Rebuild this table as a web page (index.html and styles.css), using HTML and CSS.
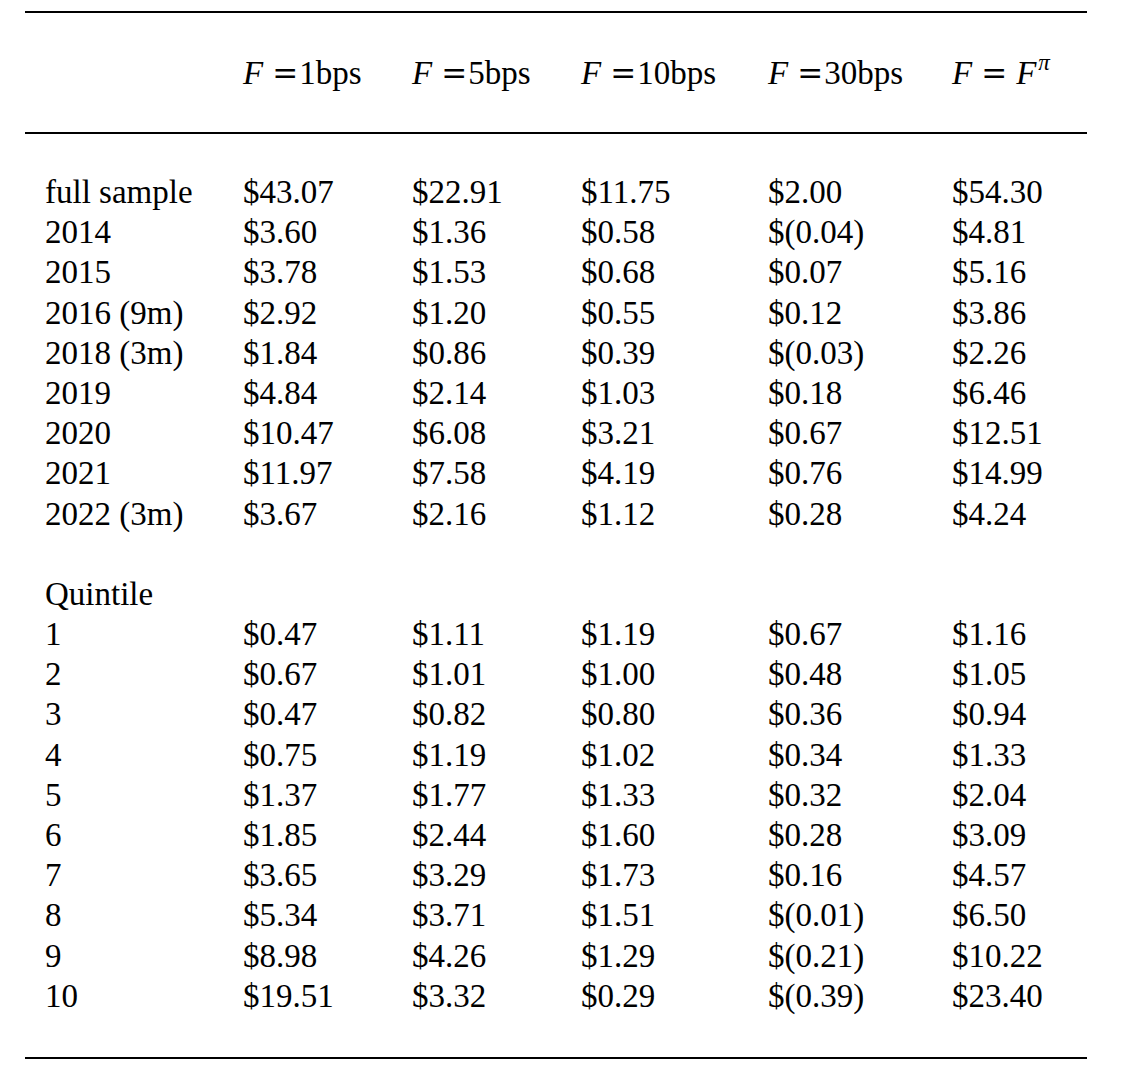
FILE: index.html
```html
<!DOCTYPE html>
<html>
<head>
<meta charset="utf-8">
<link rel="stylesheet" href="styles.css">
</head>
<body>
<div class="page">
<table class="tbl">
<colgroup>
<col class="c0"><col class="c1"><col class="c2"><col class="c3"><col class="c4"><col class="c5">
</colgroup>
<thead>
<tr>
<th></th>
<th><span class="m">F</span><span class="rel">=</span>1bps</th>
<th><span class="m">F</span><span class="rel">=</span>5bps</th>
<th><span class="m">F</span><span class="rel">=</span>10bps</th>
<th><span class="m">F</span><span class="rel">=</span>30bps</th>
<th><span class="m">F</span><span class="rel both">=</span><span class="m">F</span><sup class="sup">π</sup></th>
</tr>
</thead>
<tbody>
<tr class="first"><td>full sample</td><td>$43.07</td><td>$22.91</td><td>$11.75</td><td>$2.00</td><td>$54.30</td></tr>
<tr><td>2014</td><td>$3.60</td><td>$1.36</td><td>$0.58</td><td>$(0.04)</td><td>$4.81</td></tr>
<tr><td>2015</td><td>$3.78</td><td>$1.53</td><td>$0.68</td><td>$0.07</td><td>$5.16</td></tr>
<tr><td>2016 (9m)</td><td>$2.92</td><td>$1.20</td><td>$0.55</td><td>$0.12</td><td>$3.86</td></tr>
<tr><td>2018 (3m)</td><td>$1.84</td><td>$0.86</td><td>$0.39</td><td>$(0.03)</td><td>$2.26</td></tr>
<tr><td>2019</td><td>$4.84</td><td>$2.14</td><td>$1.03</td><td>$0.18</td><td>$6.46</td></tr>
<tr><td>2020</td><td>$10.47</td><td>$6.08</td><td>$3.21</td><td>$0.67</td><td>$12.51</td></tr>
<tr><td>2021</td><td>$11.97</td><td>$7.58</td><td>$4.19</td><td>$0.76</td><td>$14.99</td></tr>
<tr><td>2022 (3m)</td><td>$3.67</td><td>$2.16</td><td>$1.12</td><td>$0.28</td><td>$4.24</td></tr>
<tr class="group"><td>Quintile</td><td></td><td></td><td></td><td></td><td></td></tr>
<tr><td>1</td><td>$0.47</td><td>$1.11</td><td>$1.19</td><td>$0.67</td><td>$1.16</td></tr>
<tr><td>2</td><td>$0.67</td><td>$1.01</td><td>$1.00</td><td>$0.48</td><td>$1.05</td></tr>
<tr><td>3</td><td>$0.47</td><td>$0.82</td><td>$0.80</td><td>$0.36</td><td>$0.94</td></tr>
<tr><td>4</td><td>$0.75</td><td>$1.19</td><td>$1.02</td><td>$0.34</td><td>$1.33</td></tr>
<tr><td>5</td><td>$1.37</td><td>$1.77</td><td>$1.33</td><td>$0.32</td><td>$2.04</td></tr>
<tr><td>6</td><td>$1.85</td><td>$2.44</td><td>$1.60</td><td>$0.28</td><td>$3.09</td></tr>
<tr><td>7</td><td>$3.65</td><td>$3.29</td><td>$1.73</td><td>$0.16</td><td>$4.57</td></tr>
<tr><td>8</td><td>$5.34</td><td>$3.71</td><td>$1.51</td><td>$(0.01)</td><td>$6.50</td></tr>
<tr><td>9</td><td>$8.98</td><td>$4.26</td><td>$1.29</td><td>$(0.21)</td><td>$10.22</td></tr>
<tr class="last"><td>10</td><td>$19.51</td><td>$3.32</td><td>$0.29</td><td>$(0.39)</td><td>$23.40</td></tr>
</tbody>
</table>
</div>
</body>
</html>
```
FILE: styles.css
```css
html, body {
  margin: 0;
  padding: 0;
  background: #fff;
}
.page {
  padding: 11px 0 0 25px;
}
.tbl {
  border-collapse: separate;
  border-spacing: 0;
  table-layout: fixed;
  width: 1062px;
  font-family: "Liberation Serif", "Times New Roman", serif;
  font-size: 33px;
  color: #000;
}
.c0 { width: 198px; }
.c1 { width: 169px; }
.c2 { width: 169px; }
.c3 { width: 187px; }
.c4 { width: 184px; }
.c5 { width: 155px; }
.tbl th,
.tbl td {
  padding: 0 0 0 20px;
  text-align: left;
  white-space: nowrap;
  font-weight: normal;
  vertical-align: middle;
}
.tbl th {
  height: 119px;
  line-height: 40px;
  border-top: 2px solid #000;
  border-bottom: 2px solid #000;
  box-sizing: content-box;
}
.tbl td {
  height: 40.2px;
  line-height: 40.2px;
}
.m {
  font-style: italic;
  margin-right: 1px;
}
.rel {
  font-family: "DejaVu Serif", serif;
  font-size: 31px;
  margin-left: 8px;
  margin-right: 1px;
}
.rel.both {
  margin-right: 9px;
}
.sup {
  font-size: 0.7em;
  font-style: italic;
  vertical-align: 0.6em;
  line-height: 0;
  margin-left: 1px;
}
.first td {
  padding-top: 38px;
}
.group td {
  padding-top: 40px;
}
.last td {
  padding-bottom: 41px;
  border-bottom: 2px solid #000;
}
```
